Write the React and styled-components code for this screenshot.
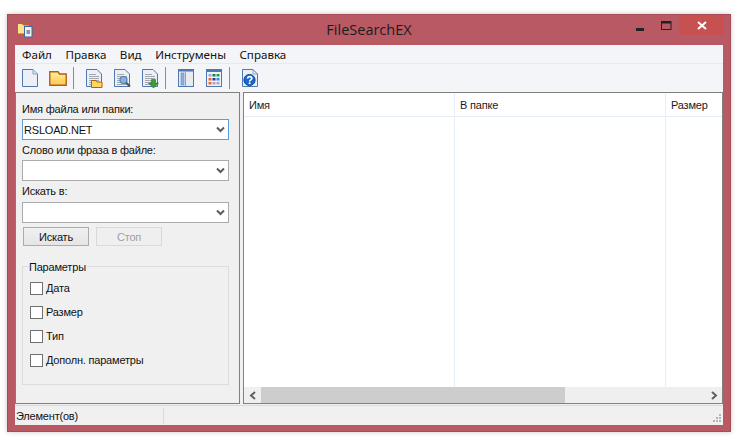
import React from 'react';
import styled, { createGlobalStyle } from 'styled-components';

const GlobalStyle = createGlobalStyle`
  html, body {
    margin: 0;
    background: #fff;
  }
  body {
    padding: 14px 7px;
    font-family: "Liberation Sans", "Noto Sans", sans-serif;
    font-size: 11px;
    letter-spacing: -0.2px;
    color: #111;
  }
`;

const Page = () => (
  <Window>
    <TitleBar>
      <TitleIconSlot>
        <AppIcon />
      </TitleIconSlot>
      <Title>FileSearchEX</Title>
      <WindowControls>
        <ControlButton>
          <svg width="9" height="3"><rect width="8" height="3" y="0" fill="#222" /></svg>
        </ControlButton>
        <ControlButton>
          <svg width="11" height="9">
            <rect x="0.5" y="0.5" width="9.5" height="8" fill="none" stroke="#222" />
            <rect x="0" y="0" width="10" height="2.5" fill="#222" />
          </svg>
        </ControlButton>
        <CloseButton>
          <svg width="10" height="9">
            <path d="M1 1 L9 8 M9 1 L1 8" stroke="#fff" strokeWidth="2" />
          </svg>
        </CloseButton>
      </WindowControls>
    </TitleBar>

    <Client>
      <MenuBar>
        {['Файл', 'Правка', 'Вид', 'Инструмены', 'Справка'].map((item) => (
          <MenuItem key={item}>{item}</MenuItem>
        ))}
      </MenuBar>

      <Toolbar>
        <ToolButton><NewDocIcon /></ToolButton>
        <ToolButton><FolderIcon /></ToolButton>
        <ToolSeparator />
        <ToolButton><DocFolderIcon /></ToolButton>
        <ToolButton><DocSearchIcon /></ToolButton>
        <ToolButton><DocDownIcon /></ToolButton>
        <ToolSeparator />
        <ToolButton><PanelIcon /></ToolButton>
        <ToolButton><GridIcon /></ToolButton>
        <ToolSeparator />
        <ToolButton><HelpIcon /></ToolButton>
      </Toolbar>

      <Panels>
        <SearchPanel>
          <FieldLabel>Имя файла или папки:</FieldLabel>
          <Combo $focused>
            <ComboText>RSLOAD.NET</ComboText>
            <Chevron />
          </Combo>
          <FieldLabel>Слово или фраза в файле:</FieldLabel>
          <Combo>
            <ComboText />
            <Chevron />
          </Combo>
          <FieldLabel $tall>Искать в:</FieldLabel>
          <Combo>
            <ComboText />
            <Chevron />
          </Combo>
          <ButtonRow>
            <PushButton>Искать</PushButton>
            <PushButton $disabled>Стоп</PushButton>
          </ButtonRow>
          <Group>
            <GroupLegend>Параметры</GroupLegend>
            {['Дата', 'Размер', 'Тип', 'Дополн. параметры'].map((label) => (
              <CheckRow key={label}>
                <CheckBox />
                <span>{label}</span>
              </CheckRow>
            ))}
          </Group>
        </SearchPanel>

        <ResultPanel>
          <ListHeader>
            <HeaderCell $width={211}>Имя</HeaderCell>
            <HeaderCell $width={211}>В папке</HeaderCell>
            <HeaderCell $grow>Размер</HeaderCell>
          </ListHeader>
          <ListBody>
            <ColumnGuide $width={211} />
            <ColumnGuide $width={211} />
          </ListBody>
          <ScrollBar>
            <ScrollArrow>
              <svg width="8" height="9">
                <path d="M6 1 L2 4.5 L6 8" fill="none" stroke="#606060" strokeWidth="2" />
              </svg>
            </ScrollArrow>
            <ScrollTrack>
              <ScrollThumb />
            </ScrollTrack>
            <ScrollArrow>
              <svg width="8" height="9">
                <path d="M2 1 L6 4.5 L2 8" fill="none" stroke="#606060" strokeWidth="2" />
              </svg>
            </ScrollArrow>
          </ScrollBar>
        </ResultPanel>
      </Panels>

      <StatusBar>
        <StatusCell>Элемент(ов)</StatusCell>
        <StatusRest>
          <Grip />
        </StatusRest>
      </StatusBar>
    </Client>
  </Window>
);

export default function App() {
  return (
    <>
      <GlobalStyle />
      <Page />
    </>
  );
}

function AppIcon() {
  return (
    <svg width="16" height="16" viewBox="0 0 16 16">
      <path d="M0.5 1.5 H5 L6.5 3 H12 V12 H0.5 Z" fill="#fde48a" stroke="#c8620a" />
      <rect x="7.5" y="4.5" width="7.5" height="10.5" fill="#eef2f8" stroke="#3d68a8" />
      <rect x="9.5" y="8" width="3.5" height="4" fill="#8a95a3" />
    </svg>
  );
}

function Sheet() {
  return <path d="M0.5 0.5 H11 L15.5 5 V17.5 H0.5 Z" fill="#eceff5" stroke="#4f77b0" />;
}

function Lines() {
  return <path d="M3 5.5 H10 M3 7.5 H13 M3 9.5 H13 M3 11.5 H13 M3 13.5 H13 M3 15.5 H13" stroke="#a4a8af" />;
}

function NewDocIcon() {
  return (
    <svg width="16" height="18">
      <Sheet />
      <path d="M11 0.5 V5 H15.5" fill="#d6dce8" stroke="#8ba3c8" />
    </svg>
  );
}

function FolderIcon() {
  return (
    <svg width="18" height="15">
      <defs>
        <linearGradient id="fold" x1="0" y1="0" x2="0" y2="1">
          <stop offset="0" stopColor="#fff0a0" />
          <stop offset="1" stopColor="#fdc94e" />
        </linearGradient>
      </defs>
      <path d="M0.8 0.8 H9 L10.5 3 H17.2 V14.2 H0.8 Z" fill="url(#fold)" stroke="#bf5a08" strokeWidth="1.4" />
    </svg>
  );
}

function DocFolderIcon() {
  return (
    <svg width="17" height="19">
      <Sheet />
      <Lines />
      <path d="M5.5 11.5 H10 L11 13 H16 V18.5 H5.5 Z" fill="#fdd964" stroke="#bf5a08" />
    </svg>
  );
}

function DocSearchIcon() {
  return (
    <svg width="17" height="19">
      <Sheet />
      <Lines />
      <circle cx="9.5" cy="11" r="3.5" fill="#7fb4ea" stroke="#5a7da8" strokeWidth="1.2" />
      <path d="M12 13.5 L16 17.5" stroke="#555" strokeWidth="2" />
    </svg>
  );
}

function DocDownIcon() {
  return (
    <svg width="17" height="19">
      <Sheet />
      <Lines />
      <path d="M9.5 10.5 H13.5 V14 H16.5 L11.5 19 L6.5 14 H9.5 Z" fill="#3f9a3a" stroke="#2a6e28" strokeWidth="0.6" />
    </svg>
  );
}

function PanelIcon() {
  return (
    <svg width="16" height="18">
      <rect x="0.5" y="0.5" width="15" height="17" fill="#e8ebf2" stroke="#4f77b0" />
      <rect x="1" y="1" width="14" height="1.5" fill="#4f77b0" />
      <rect x="3" y="4" width="3" height="12" fill="#8fb2df" stroke="#5f86bb" strokeWidth="0.6" />
      <path d="M7.5 2 V17" stroke="#8ba3c8" />
    </svg>
  );
}

function GridIcon() {
  const cells = [
    ['#a6a6d8', '#1f7f3f', '#1f9f4f'],
    ['#f06a20', '#1f3f9f', '#2f8fdf'],
    ['#f06a20', '#c0a0a0', '#a6a6d8'],
  ];
  return (
    <svg width="16" height="18">
      <rect x="0.5" y="0.5" width="15" height="17" fill="#f0f2f7" stroke="#4f77b0" />
      <rect x="1" y="1" width="14" height="2" fill="#4f77b0" />
      {cells.map((row, r) =>
        row.map((c, i) => (
          <rect key={`${r}-${i}`} x={2.5 + i * 4} y={5 + r * 4} width="3" height="2.5" fill={c} />
        ))
      )}
    </svg>
  );
}

function HelpIcon() {
  return (
    <svg width="16" height="19">
      <Sheet />
      <path d="M11 0.5 V5 H15.5" fill="none" stroke="#8ba3c8" />
      <circle cx="7.5" cy="11" r="5.6" fill="#1a66cc" stroke="#0d4a9e" />
      <path d="M5.5 9.5 C5.5 7 9.8 7 9.8 9.5 C9.8 11 7.6 10.8 7.6 12.6" fill="none" stroke="#fff" strokeWidth="1.7" />
      <rect x="6.7" y="13.4" width="1.8" height="1.7" fill="#fff" />
    </svg>
  );
}

function Chevron() {
  return (
    <ChevronSlot>
      <svg width="9" height="7">
        <path d="M1 1.5 L4.5 5 L8 1.5" fill="none" stroke="#5c5c5c" strokeWidth="2" />
      </svg>
    </ChevronSlot>
  );
}

function Grip() {
  return (
    <GripSlot>
      <svg width="9" height="9">
        <g fill="#b4b4b4">
          <rect x="6" y="0" width="2" height="2" />
          <rect x="3" y="3" width="2" height="2" />
          <rect x="6" y="3" width="2" height="2" />
          <rect x="0" y="6" width="2" height="2" />
          <rect x="3" y="6" width="2" height="2" />
          <rect x="6" y="6" width="2" height="2" />
        </g>
      </svg>
    </GripSlot>
  );
}

const Window = styled.div`
  width: 724px;
  height: 418px;
  box-sizing: border-box;
  display: flex;
  flex-direction: column;
  background: #b95963;
  border: 1px solid #a64c57;
  box-shadow: 0 0 5px rgba(0, 0, 0, 0.22);
`;

const TitleBar = styled.div`
  height: 30px;
  flex: none;
  display: grid;
  grid-template-columns: 1fr auto 1fr;
  align-items: start;
`;

const TitleIconSlot = styled.div`
  padding: 7px 0 0 9px;
  display: flex;
  svg {
    display: block;
  }
`;

const Title = styled.div`
  font-family: "Open Sans", "Noto Sans", sans-serif;
  font-size: 14.5px;
  letter-spacing: 0;
  line-height: 30px;
  color: #1c1c1c;
`;

const WindowControls = styled.div`
  justify-self: end;
  display: flex;
  padding-right: 6px;
`;

const ControlButton = styled.div`
  width: 26px;
  height: 20px;
  display: flex;
  align-items: center;
  justify-content: center;
  svg {
    display: block;
  }
  &:first-child svg {
    margin-top: 8px;
  }
`;

const CloseButton = styled(ControlButton)`
  width: 45px;
  background: #c75050;
`;

const Client = styled.div`
  flex: none;
  width: 708px;
  height: 380px;
  margin-left: 7px;
  display: flex;
  flex-direction: column;
  background: #f0f0f0;
`;

const MenuBar = styled.div`
  height: 18px;
  flex: none;
  display: flex;
  align-items: center;
  gap: 13.5px;
  padding: 0 0 0 7px;
  background: #f4f5f9;
  border-bottom: 1px solid #e8e9ee;
  font-family: "Noto Sans", sans-serif;
  font-size: 11.6px;
  letter-spacing: 0;
`;

const MenuItem = styled.span`
  color: #111;
`;

const Toolbar = styled.div`
  height: 28px;
  flex: none;
  display: flex;
  align-items: center;
  padding-left: 1px;
  background: #f4f5f9;
`;

const ToolButton = styled.div`
  width: 28px;
  height: 28px;
  display: flex;
  align-items: center;
  justify-content: center;
  svg {
    display: block;
  }
`;

const ToolSeparator = styled.div`
  width: 8px;
  height: 22px;
  box-sizing: border-box;
  flex: none;
  padding-left: 1px;
  &::before {
    content: '';
    display: block;
    width: 1px;
    height: 100%;
    background: #8c8c8c;
  }
`;

const Panels = styled.div`
  height: 312px;
  flex: none;
  display: flex;
  gap: 3px;
`;

const SearchPanel = styled.div`
  width: 225px;
  box-sizing: border-box;
  flex: none;
  padding: 6px 10px 0 6px;
  border: 1px solid #808080;
  background: #f0f0f0;
`;

const FieldLabel = styled.div`
  height: ${(p) => (p.$tall ? 21 : 20)}px;
  line-height: 20px;
`;

const Combo = styled.div`
  height: 21px;
  box-sizing: border-box;
  display: flex;
  align-items: center;
  background: #fff;
  border: 1px solid ${(p) => (p.$focused ? '#5a9ee0' : '#ababab')};
`;

const ComboText = styled.div`
  flex: 1;
  padding-left: 1px;
`;

const ChevronSlot = styled.div`
  width: 15px;
  flex: none;
  display: flex;
  justify-content: center;
  svg {
    display: block;
  }
`;

const ButtonRow = styled.div`
  display: flex;
  gap: 7px;
  margin: 4px 0 0 1px;
`;

const PushButton = styled.div`
  width: 66px;
  height: 19px;
  box-sizing: border-box;
  display: flex;
  align-items: center;
  justify-content: center;
  border: 1px solid ${(p) => (p.$disabled ? '#d9d9d9' : '#acacac')};
  background: ${(p) => (p.$disabled ? '#efefef' : 'linear-gradient(#f0f0f0, #e5e5e5)')};
  color: ${(p) => (p.$disabled ? '#a0a0a0' : '#111')};
`;

const Group = styled.fieldset`
  width: 207px;
  height: 127px;
  box-sizing: border-box;
  margin: 12px 0 0;
  padding: 2px 0 0 7px;
  border: 1px solid #dcdcdc;
  min-width: 0;
`;

const GroupLegend = styled.legend`
  padding: 2px 1px 0 0;
  margin-left: -1px;
  line-height: 14px;
`;

const CheckRow = styled.div`
  height: 24px;
  display: flex;
  align-items: center;
  gap: 3px;
`;

const CheckBox = styled.div`
  width: 13px;
  height: 13px;
  flex: none;
  box-sizing: border-box;
  background: #fff;
  border: 1px solid #707070;
`;

const ResultPanel = styled.div`
  flex: 1;
  min-width: 0;
  display: flex;
  flex-direction: column;
  background: #fff;
  border: 1px solid #808080;
`;

const ListHeader = styled.div`
  height: 23px;
  flex: none;
  display: flex;
  background: #fff;
  border-bottom: 1px solid #e5edf7;
`;

const HeaderCell = styled.div`
  width: ${(p) => (p.$grow ? 'auto' : `${p.$width}px`)};
  flex: ${(p) => (p.$grow ? 1 : 'none')};
  box-sizing: border-box;
  padding-left: 5px;
  line-height: 24px;
  border-right: ${(p) => (p.$grow ? 'none' : '1px solid #e5edf7')};
  color: #1a1a2a;
`;

const ListBody = styled.div`
  flex: 1;
  display: flex;
  background: #fff;
`;

const ColumnGuide = styled.div`
  width: ${(p) => p.$width}px;
  box-sizing: border-box;
  border-right: 1px solid #e5edf7;
`;

const ScrollBar = styled.div`
  height: 16px;
  flex: none;
  display: flex;
  background: #efefef;
`;

const ScrollArrow = styled.div`
  width: 17px;
  flex: none;
  display: flex;
  align-items: center;
  justify-content: center;
  svg {
    display: block;
  }
`;

const ScrollTrack = styled.div`
  flex: 1;
  display: flex;
`;

const ScrollThumb = styled.div`
  width: 304px;
  background: #cdcdcd;
`;

const StatusBar = styled.div`
  height: 19px;
  margin-top: 1px;
  flex: none;
  display: flex;
  align-items: center;
  border-top: 1px solid #dadada;
  background: #f0f0f0;
`;

const StatusCell = styled.div`
  width: 149px;
  height: 16px;
  flex: none;
  box-sizing: border-box;
  padding-left: 1px;
  line-height: 17px;
  border-right: 1px solid #d9d9d9;
`;

const StatusRest = styled.div`
  flex: 1;
  height: 100%;
  display: flex;
  align-items: flex-end;
  justify-content: flex-end;
`;

const GripSlot = styled.div`
  padding: 0 1px 2px 0;
  svg {
    display: block;
  }
`;
